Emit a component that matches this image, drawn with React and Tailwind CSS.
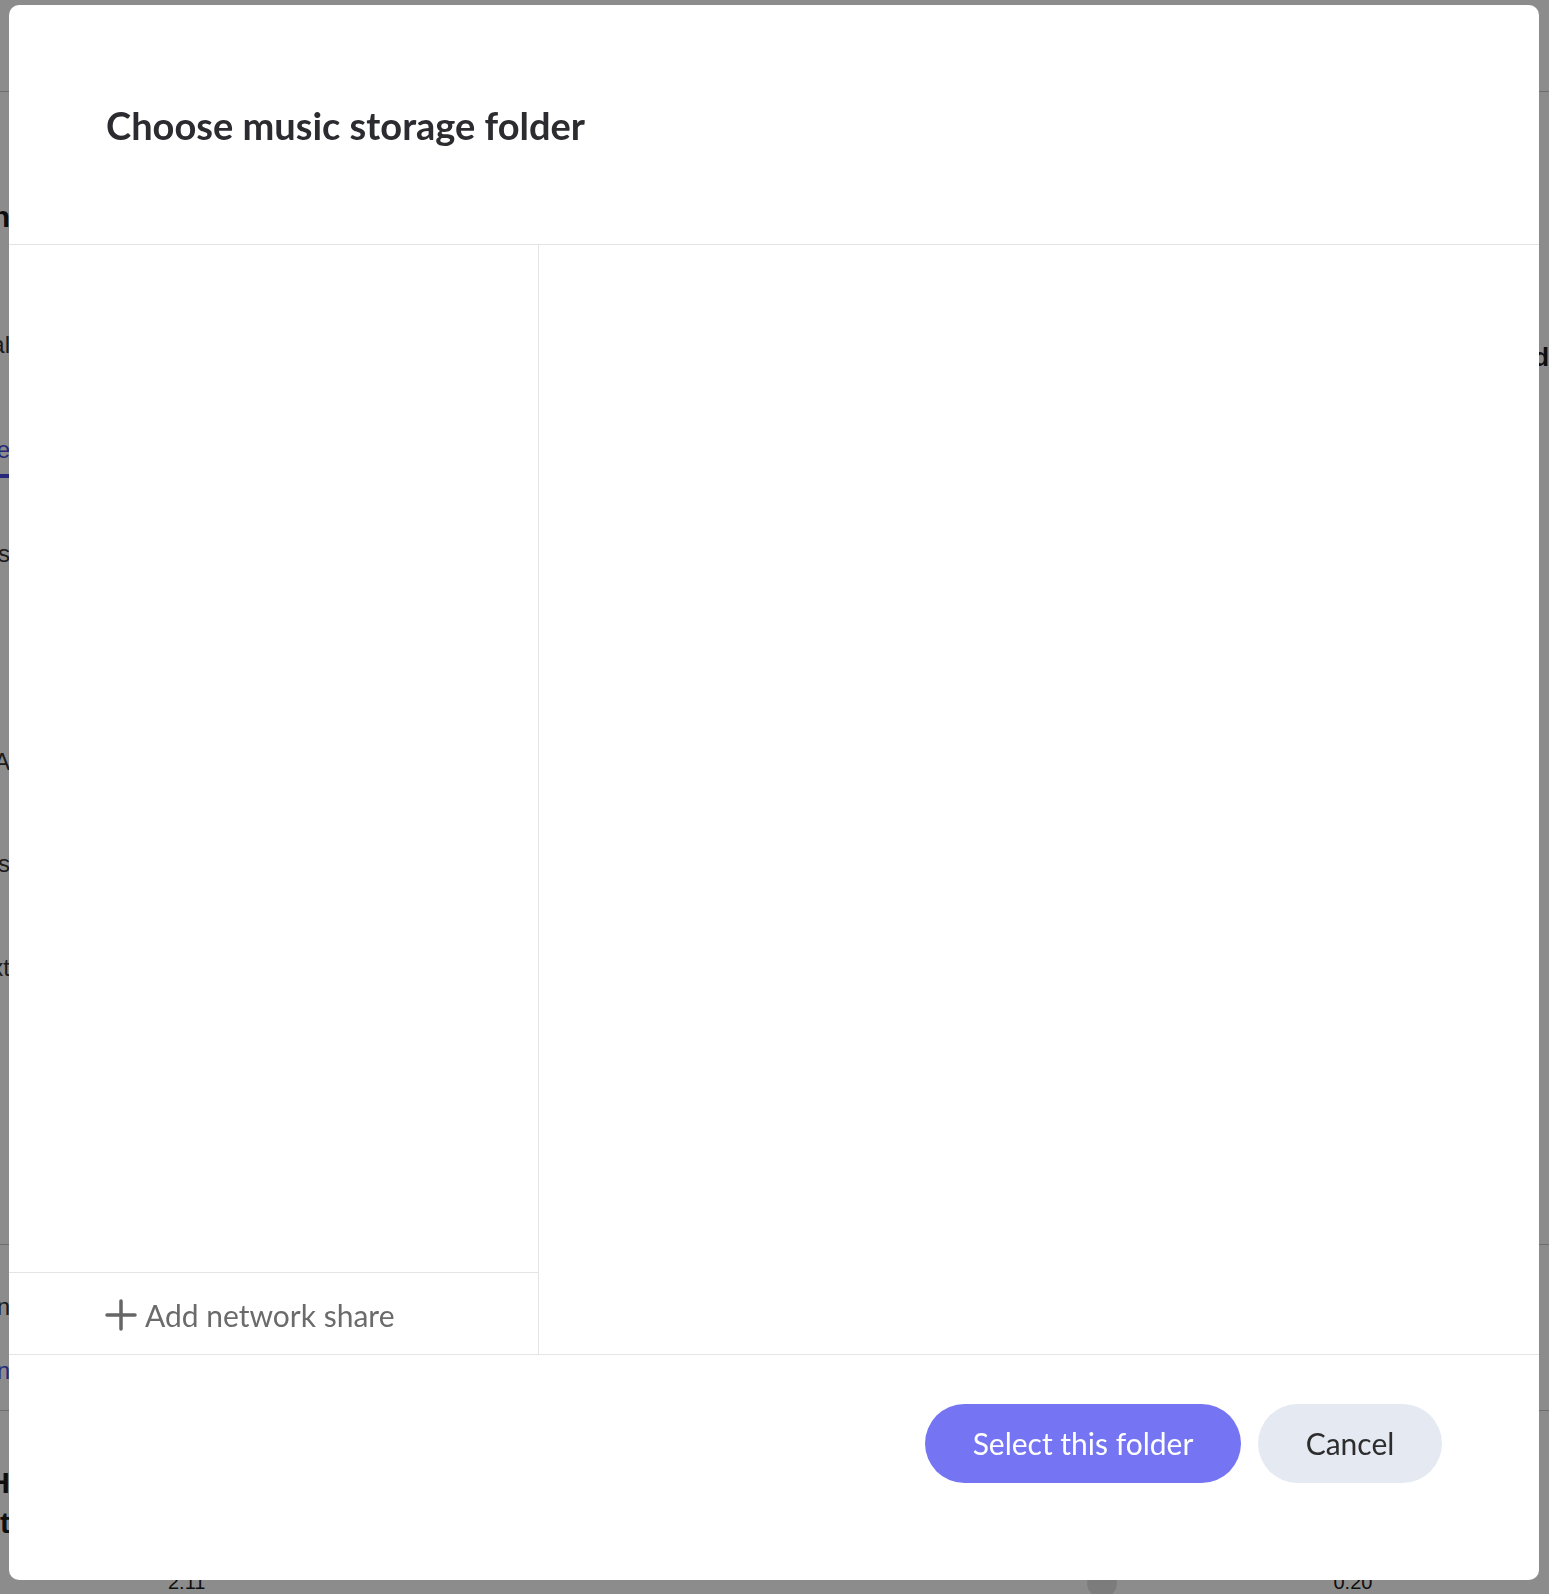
import React from 'react'

// bits of the page that peek out from behind the dialog
const Sliver = ({ children, className = '' }) => (
  <div className="w-[10px] flex justify-end whitespace-nowrap">
    <span className={className}>{children}</span>
  </div>
)

const Background = () => {
  return (
    <div className="w-full h-full bg-white flex flex-col font-['Liberation_Sans',sans-serif] text-[#1a1a1a] overflow-hidden">
      <div className="h-[92px] border-b border-[#c8c8c8] shrink-0"></div>
      <div className="h-[90px] shrink-0"></div>
      <div className="h-[68px] shrink-0 flex items-center">
        <Sliver className="text-[30px] font-bold">Kan</Sliver>
      </div>
      <div className="h-[60px] shrink-0"></div>
      <div className="h-[70px] shrink-0 flex items-center justify-between">
        <Sliver className="text-[24px] text-[#333]">Local</Sliver>
        <span className="text-[26px] font-bold mt-[24px] -mr-[16px]">Add</span>
      </div>
      <div className="h-[50px] shrink-0"></div>
      <div className="h-[40px] shrink-0 flex items-center">
        <Sliver className="text-[24px] text-[#4a4ae0]">Storage</Sliver>
      </div>
      <div className="h-[4px] shrink-0"></div>
      <div className="h-[4px] w-[60px] -ml-[40px] bg-[#4a4ae0] shrink-0"></div>
      <div className="h-[56px] shrink-0"></div>
      <div className="h-[40px] shrink-0 flex items-center">
        <Sliver className="text-[24px] text-[#333]">Files</Sliver>
      </div>
      <div className="h-[168px] shrink-0"></div>
      <div className="h-[40px] shrink-0 flex items-center">
        <Sliver className="text-[24px] text-[#333]">MA</Sliver>
      </div>
      <div className="h-[62px] shrink-0"></div>
      <div className="h-[40px] shrink-0 flex items-center">
        <Sliver className="text-[24px] text-[#333]">Tags</Sliver>
      </div>
      <div className="h-[64px] shrink-0"></div>
      <div className="h-[40px] shrink-0 flex items-center">
        <Sliver className="text-[24px] text-[#333]">Text</Sliver>
      </div>
      <div className="h-[257px] shrink-0 border-b border-[#c8c8c8]"></div>
      <div className="h-[42px] shrink-0"></div>
      <div className="h-[40px] shrink-0 flex items-center">
        <Sliver className="text-[24px] text-[#333]">Scan</Sliver>
      </div>
      <div className="h-[24px] shrink-0"></div>
      <div className="h-[40px] shrink-0 flex items-center">
        <Sliver className="text-[24px] text-[#4a4ae0]">Learn</Sliver>
      </div>
      <div className="h-[20px] shrink-0 border-b border-[#c8c8c8]"></div>
      <div className="h-[51px] shrink-0"></div>
      <div className="h-[40px] shrink-0 flex items-center">
        <Sliver className="text-[30px] font-bold">H</Sliver>
      </div>
      <div className="h-[40px] shrink-0 flex items-center">
        <Sliver className="text-[30px] font-bold">t</Sliver>
      </div>
      <div className="h-[26px] shrink-0"></div>
      <div className="h-[36px] shrink-0 flex items-start text-[20px] leading-none">
        <span className="ml-[168px] mt-[4px]">2:11</span>
        <div className="ml-[882px] w-[30px] h-[30px] rounded-full bg-[#e2e2e2]"></div>
        <span className="ml-[216px] mt-[4px]">0:20</span>
      </div>
    </div>
  )
}

const PlusIcon = () => (
  <svg width="32" height="32" viewBox="0 0 32 32" fill="none" stroke="#666666" strokeWidth="3.5" strokeLinecap="round">
    <path d="M16 2v28M2 16h28" />
  </svg>
)

const FolderDialog = () => {
  return (
    <div className="ml-[9px] mt-[5px] w-[1530px] h-[1575px] bg-white rounded-[10px] flex flex-col overflow-hidden font-['Lato',sans-serif]">
      <div className="h-[240px] shrink-0 border-b border-[#e4e4e4] flex items-center pl-[97px]">
        <h2 className="text-[38px] font-bold text-[#2b2b30] leading-none">Choose music storage folder</h2>
      </div>
      <div className="flex-1 flex border-b border-[#e4e4e4]">
        <div className="w-[530px] shrink-0 border-r border-[#e4e4e4] flex flex-col">
          <div className="flex-1"></div>
          <button className="h-[82px] shrink-0 border-t border-[#e4e4e4] flex items-center pl-[96px] gap-[8px] text-[30px] text-[#6b6b6b] pt-[3px]">
            <PlusIcon />
            <span>Add network share</span>
          </button>
        </div>
        <div className="flex-1"></div>
      </div>
      <div className="h-[225px] shrink-0 flex justify-end items-start pt-[49px] pr-[97px] gap-[17px]">
        <button className="h-[79px] w-[316px] rounded-full bg-[#7575f3] text-white text-[30px]">
          Select this folder
        </button>
        <button className="h-[79px] w-[184px] rounded-full bg-[#e5e9f2] text-[#2d2d2d] text-[30px]">
          Cancel
        </button>
      </div>
    </div>
  )
}

const App = () => {
  return (
    <div className="relative w-[1549px] h-[1594px] overflow-hidden">
      <Background />
      <div className="fixed inset-0 bg-black/45 flex items-start">
        <FolderDialog />
      </div>
    </div>
  )
}
export default App;
